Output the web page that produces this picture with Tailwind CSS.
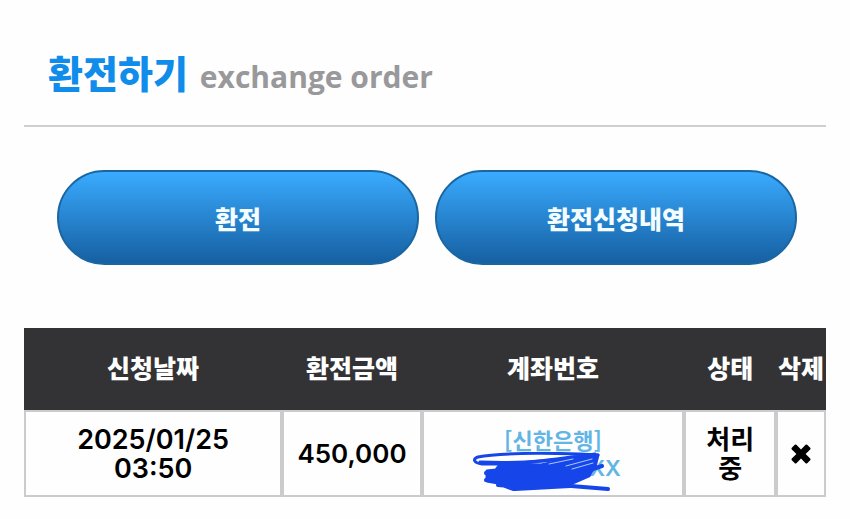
<!DOCTYPE html>
<html lang="ko">
<head>
<meta charset="utf-8">
<meta name="viewport" content="width=device-width, initial-scale=1">
<title>환전하기</title>
<script src="https://cdn.jsdelivr.net/npm/@tailwindcss/browser@4"></script>
</head>
<body class="bg-[#fefefe] px-6 font-['Inter','Noto_Sans_CJK_KR',sans-serif] text-black">
<header class="flex items-baseline gap-3 border-b-2 border-[#cfcfd0] px-6 pt-[43px] pb-5">
  <h1 class="font-['Noto_Sans_CJK_KR',sans-serif] text-[38px] leading-[57px] font-black text-[#108cea]">환전하기</h1>
  <p class="font-['Open_Sans',sans-serif] text-[30px] leading-[57px] font-bold text-[#99989b]">exchange order</p>
</header>
<main>
  <nav class="mt-[43px] grid grid-cols-2 gap-4 pr-[29px] pl-[33px] font-['Noto_Sans_CJK_KR',sans-serif] text-[25px] leading-9 font-black text-[#f4fdff]">
    <button type="button" class="h-[95px] rounded-full border-2 border-[#1a66a0] bg-linear-to-b from-[#3aabff] to-[#1660a2]">환전</button>
    <button type="button" class="h-[95px] rounded-full border-2 border-[#1a66a0] bg-linear-to-b from-[#3aabff] to-[#1660a2]">환전신청내역</button>
  </nav>
  <table class="mt-[63px] w-full table-fixed border-separate border-spacing-0 text-center">
    <colgroup>
      <col class="w-[32.2%]"><col class="w-[17.4%]"><col class="w-[32.7%]"><col class="w-[11.5%]"><col class="w-[6.2%]">
    </colgroup>
    <thead class="bg-[#333335] font-['Noto_Sans_CJK_KR',sans-serif] text-[25px] leading-9 whitespace-nowrap text-white">
      <tr class="h-[82px]">
        <th scope="col" class="pt-0 pb-1 font-black">신청날짜</th>
        <th scope="col" class="pt-0 pb-1 font-black">환전금액</th>
        <th scope="col" class="pt-0 pb-1 font-black">계좌번호</th>
        <th scope="col" class="pt-0 pb-1 font-black">상태</th>
        <th scope="col" class="pt-0 pb-1 font-black">삭제</th>
      </tr>
    </thead>
    <tbody class="text-[26px] leading-[29px] font-semibold">
      <tr class="h-[87px]">
        <td class="border-2 border-[#cbcbcd] text-[27px] leading-[29px]"><div>2025/01/25</div><div>03:50</div></td>
        <td class="border-2 border-[#cbcbcd]">450,000</td>
        <td class="border-2 border-[#cbcbcd] text-[#63b5e5]">
          <div class="font-['Noto_Sans_CJK_KR',sans-serif] text-[22px] leading-[29px] font-bold">[신한은행]</div>
          <div class="relative mx-auto w-[136px] text-right text-[22px] leading-[29px]">XX
            <svg class="absolute -top-0.5 -left-3 h-[40px] w-[140px]" viewBox="0 0 140 40" fill="none" stroke="#1646ea" stroke-linecap="round" stroke-linejoin="round" aria-hidden="true">
              <path d="M14 19L23 18L26 14L44 12L68 13L92 8L125 3L122 15L118 20L116 24L100 31L77 34L35 35L25 31L14 29Z" fill="#1646ea" stroke-width="3"/>
              <path d="M125 3C94 1 29 0 5 5C-1 7 1 11 9 12C42 13 85 7 122 2" stroke-width="3"/>
              <path d="M7 10C35 11 72 10 103 5" stroke-width="3"/>
              <path d="M13 21L65 17M13 28L65 24M25 33C55 36 87 28 129 14M27 32L40 37C57 32 72 34 86 33L135 37M42 37L97 34" stroke-width="4"/>
              <path d="M76 12L100 7M93 14L119 7M99 17L120 11" stroke="#a9cbf7" stroke-width="1"/>
            </svg>
          </div>
        </td>
        <td class="border-2 border-[#cbcbcd] font-bold">처리<br>중</td>
        <td class="border-2 border-[#cbcbcd]">
          <button type="button" aria-label="삭제" class="block w-full">
            <svg class="mx-auto size-5" viewBox="0 0 20 20" fill="currentColor" aria-hidden="true"><path d="M5.4.8 10 5.4 14.6.8q.8-.8 1.6 0l3 3q.8.8 0 1.6L14.6 10l4.6 4.6q.8.8 0 1.6l-3 3q-.8.8-1.6 0L10 14.6l-4.6 4.6q-.8.8-1.6 0l-3-3q-.8-.8 0-1.6L5.4 10 .8 5.4Q0 4.6.8 3.8l3-3q.8-.8 1.6 0Z"/></svg>
          </button>
        </td>
      </tr>
    </tbody>
  </table>
</main>
</body>
</html>
